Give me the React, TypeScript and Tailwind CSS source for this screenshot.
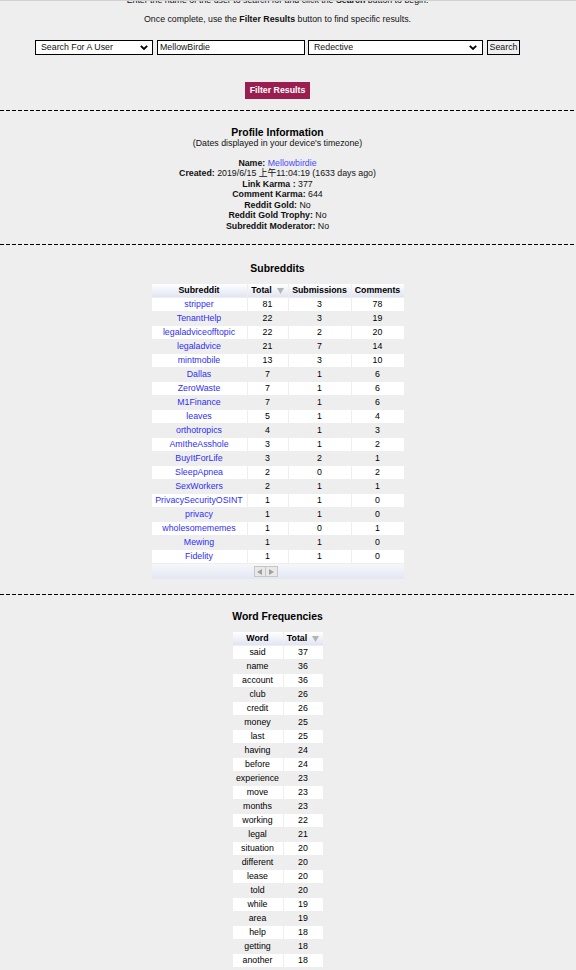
import React from 'react';

const subreddits: [string, number, number, number][] = [
  ['stripper', 81, 3, 78],
  ['TenantHelp', 22, 3, 19],
  ['legaladviceofftopic', 22, 2, 20],
  ['legaladvice', 21, 7, 14],
  ['mintmobile', 13, 3, 10],
  ['Dallas', 7, 1, 6],
  ['ZeroWaste', 7, 1, 6],
  ['M1Finance', 7, 1, 6],
  ['leaves', 5, 1, 4],
  ['orthotropics', 4, 1, 3],
  ['AmItheAsshole', 3, 1, 2],
  ['BuyItForLife', 3, 2, 1],
  ['SleepApnea', 2, 0, 2],
  ['SexWorkers', 2, 1, 1],
  ['PrivacySecurityOSINT', 1, 1, 0],
  ['privacy', 1, 1, 0],
  ['wholesomememes', 1, 0, 1],
  ['Mewing', 1, 1, 0],
  ['Fidelity', 1, 1, 0],
];

const words: [string, number][] = [
  ['said', 37], ['name', 36], ['account', 36], ['club', 26], ['credit', 26],
  ['money', 25], ['last', 25], ['having', 24], ['before', 24], ['experience', 23],
  ['move', 23], ['months', 23], ['working', 22], ['legal', 21], ['situation', 20],
  ['different', 20], ['lease', 20], ['told', 20], ['while', 19], ['area', 19],
  ['help', 18], ['getting', 18], ['another', 18],
];

const Chevron = () => (
  <svg width="8" height="5" viewBox="0 0 8 5" className="shrink-0">
    <polyline points="0.8,0.8 4,4 7.2,0.8" fill="none" stroke="#000" strokeWidth="1.8" />
  </svg>
);

const SortArrow = () => (
  <svg width="7" height="6" viewBox="0 0 7 6" className="ml-[5px] inline-block align-[-0.5px]">
    <polygon points="0,0 7,0 3.5,6" fill="#b4b4b4" />
  </svg>
);

const Dashed = ({ className = '' }: { className?: string }) => (
  <div className={`h-px w-full bg-[repeating-linear-gradient(90deg,#000_0_4px,transparent_4px_6px)] ${className}`} />
);

const headCell = 'h-[13px] p-0 font-bold leading-[13px] bg-linear-to-b from-white to-[#e1e5f2]';
const bodyCell = 'h-[13px] p-0 text-center leading-[13px]';

export default function App() {
  return (
    <div className="relative min-h-screen overflow-hidden bg-[#eeeeee] font-['Liberation_Sans','Noto_Sans_CJK_TC',sans-serif] text-[8.8px] text-[#111]">
      <div className="absolute left-0 top-0 h-px w-full bg-[#d2d2d2]" />

      <div className="w-[555px]">
        <p className="-mt-[5px] text-center leading-[10.5px]">
          Enter the name of the user to search for and click the <b>Search</b> button to begin.
        </p>
        <p className="mt-[8.5px] text-center leading-[10.5px]">
          Once complete, use the <b>Filter Results</b> button to find specific results.
        </p>

        {/* search form */}
        <div className="mt-[15.5px] flex h-[15px] justify-center">
          <div className="flex w-[118px] items-center justify-between border border-black bg-white pl-[5px] pr-[4px]">
            <span>Search For A User</span>
            <Chevron />
          </div>
          <input
            className="ml-[4px] w-[148px] border border-black bg-white px-[2px] text-[8.8px] leading-[13px] outline-none"
            defaultValue="MellowBirdie"
          />
          <div className="ml-[3px] flex w-[175px] items-center justify-between border border-black bg-white pl-[5px] pr-[5px]">
            <span>Redective</span>
            <Chevron />
          </div>
          <button className="ml-[4px] w-[33px] border border-black bg-[#efefef] text-[8.8px] leading-[13px]">
            Search
          </button>
        </div>

        <div className="mt-[27px] flex justify-center">
          <button className="h-[17px] w-[65px] bg-[#9a1f50] text-[8.8px] font-bold leading-[17px] text-white">
            Filter Results
          </button>
        </div>
      </div>

      <Dashed className="mt-[11px]" />

      {/* profile */}
      <div className="w-[555px] text-center">
        <h2 className="mt-[16px] text-[10.4px] font-bold leading-[11px] text-black">Profile Information</h2>
        <p className="leading-[10px]">(Dates displayed in your device's timezone)</p>
        <div className="mt-[9.5px]">
          <div className="h-[10.5px] leading-[10.5px]">
            <b>Name:</b> <a href="#" className="text-[#4a4af8]">Mellowbirdie</a>
          </div>
          <div className="h-[10.5px] leading-[10.5px]">
            <b>Created:</b> 2019/6/15 上午11:04:19 (1633 days ago)
          </div>
          <div className="h-[10.5px] leading-[10.5px]"><b>Link Karma :</b> 377</div>
          <div className="h-[10.5px] leading-[10.5px]"><b>Comment Karma:</b> 644</div>
          <div className="h-[10.5px] leading-[10.5px]"><b>Reddit Gold:</b> No</div>
          <div className="h-[10.5px] leading-[10.5px]"><b>Reddit Gold Trophy:</b> No</div>
          <div className="h-[10.5px] leading-[10.5px]"><b>Subreddit Moderator:</b> No</div>
        </div>
      </div>

      <Dashed className="mt-[13px]" />

      {/* subreddits */}
      <div className="flex w-[555px] flex-col items-center">
        <h2 className="mt-[18px] text-[10.4px] font-bold leading-[12px] text-black">Subreddits</h2>
        <table className="mt-[8px] w-[254px] table-fixed border-separate border-spacing-px text-black">
          <thead>
            <tr>
              <th className={`${headCell} w-[95px]`}>Subreddit</th>
              <th className={`${headCell} w-[40px]`}>Total<SortArrow /></th>
              <th className={`${headCell} w-[62px]`}>Submissions</th>
              <th className={`${headCell} w-[52px]`}>Comments</th>
            </tr>
          </thead>
          <tbody>
            {subreddits.map(([name, total, subs, comments], i) => (
              <tr key={name} className={i % 2 === 0 ? 'bg-white' : ''}>
                <td className={bodyCell}>
                  <a href="#" className="text-[#2f2ff4]">{name}</a>
                </td>
                <td className={bodyCell}>{total}</td>
                <td className={bodyCell}>{subs}</td>
                <td className={bodyCell}>{comments}</td>
              </tr>
            ))}
          </tbody>
        </table>
        <div className="flex h-[15px] w-[252px] items-center justify-center bg-linear-to-b from-[#f6f7fb] to-[#e3e7f3]">
          <div className="-ml-[24px] flex h-[11px] border border-[#c6c6c6] bg-[#e9e9e9]">
            <div className="flex w-[11px] items-center justify-center border-r border-[#c6c6c6]">
              <svg width="5" height="6" viewBox="0 0 5 6"><polygon points="5,0 5,6 0,3" fill="#a0a0a0" /></svg>
            </div>
            <div className="flex w-[11px] items-center justify-center">
              <svg width="5" height="6" viewBox="0 0 5 6"><polygon points="0,0 0,6 5,3" fill="#a0a0a0" /></svg>
            </div>
          </div>
        </div>
      </div>

      <Dashed className="mt-[15px]" />

      {/* word frequencies */}
      <div className="flex w-[555px] flex-col items-center">
        <h2 className="mt-[16px] text-[10.4px] font-bold leading-[12px] text-black">Word Frequencies</h2>
        <table className="mt-[8px] w-[92px] table-fixed border-separate border-spacing-px text-black">
          <thead>
            <tr>
              <th className={`${headCell} w-[50px]`}>Word</th>
              <th className={`${headCell} w-[39px]`}>Total<SortArrow /></th>
            </tr>
          </thead>
          <tbody>
            {words.map(([word, total], i) => (
              <tr key={word} className={i % 2 === 0 ? 'bg-white' : ''}>
                <td className={bodyCell}>{word}</td>
                <td className={bodyCell}>{total}</td>
              </tr>
            ))}
          </tbody>
        </table>
      </div>
    </div>
  );
}
